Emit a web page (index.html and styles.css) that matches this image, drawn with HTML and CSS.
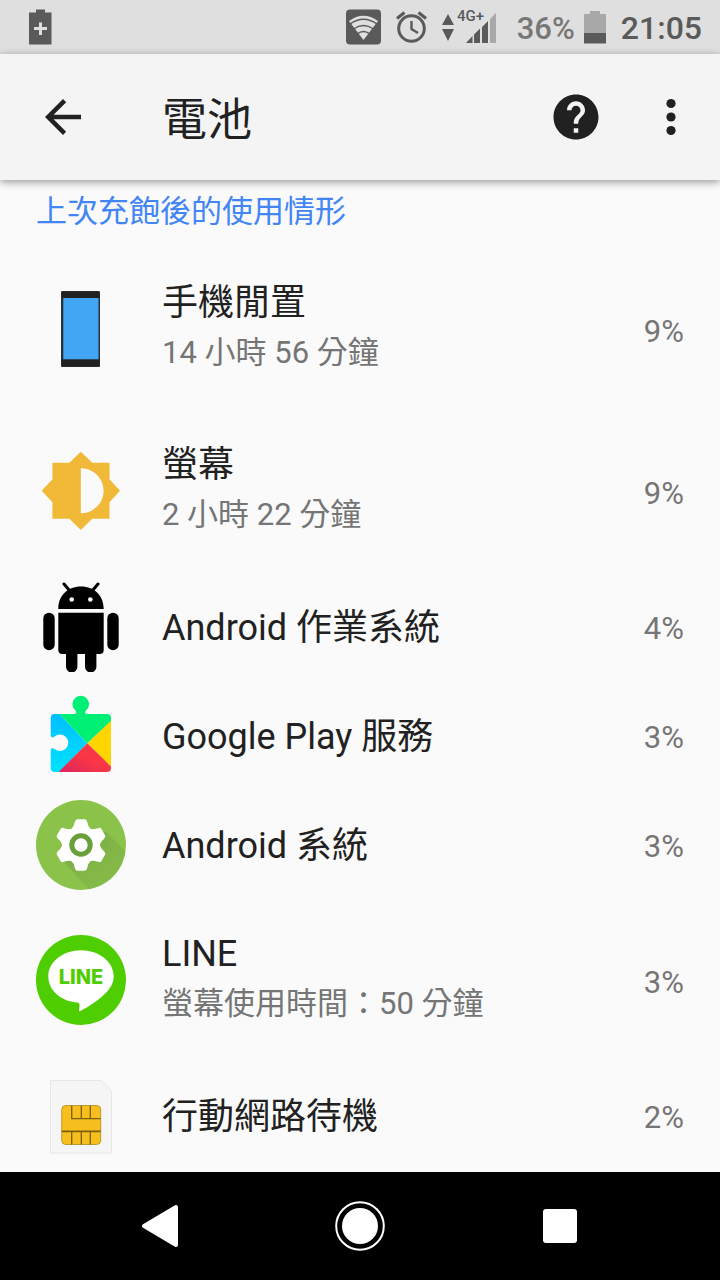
FILE: index.html
```html
<!DOCTYPE html>
<html lang="zh-Hant">
<head>
<meta charset="utf-8">
<meta name="viewport" content="width=device-width, initial-scale=1">
<title>電池</title>
<link rel="stylesheet" href="styles.css">
</head>
<body>
<div class="screen">
  <div class="status">
    <svg class="status-saver" width="24" height="36" viewBox="0 0 24 36" aria-hidden="true">
      <path fill="#5a5a5a" fill-rule="evenodd" d="M7 0.500h9v3h6.500v32H0v-32h7zM10 13.500v4.500H5v3h5v5h3v-5h5v-3h-5v-4.500z"/>
    </svg>
    <div class="status-right">
      <svg width="35" height="36" viewBox="0 0 35 36" aria-hidden="true">
        <rect x="0" y="0.500" width="35" height="35" rx="4" fill="#5a5a5a"/>
        <path d="M17.500 31L3 12q14.500-10.500 29 0z" fill="#dfdfdf"/>
        <path d="M4 15q13.500-9.500 27 0M7.500 20q10-7 20 0M11 25q6.500-5 13 0" fill="none" stroke="#5a5a5a" stroke-width="1.500"/>
      </svg>
      <svg class="alarm" width="31" height="32" viewBox="0 0 31 32" fill="none" stroke="#5a5a5a" aria-hidden="true">
        <circle cx="15.500" cy="17.500" r="12.800" stroke-width="3"/>
        <path d="M15.500 10v8l6.500 4" stroke-width="2.400"/>
        <path d="M1 7.500L8.500 1.500M30 7.500L22.500 1.500" stroke-width="3.200"/>
      </svg>
      <svg class="signal" width="56" height="48" viewBox="0 -6 56 48" role="img" aria-label="4G+">
        <path fill="#5a5a5a" d="M0 16l6-11 6 11zM0 20h12l-6 12z"/>
        <path fill="#5a5a5a" d="M24 34l6.500-7v7zM32 25.500l6-6V34h-6zM40 18l6-6v22h-6z"/>
        <path fill="#a8a8a8" d="M48 10l6-6v30h-6z"/>
        <text class="net" x="15" y="12">4G+</text>
      </svg>
      <span class="pct">36%</span>
      <svg class="battery" width="22" height="33" viewBox="0 0 22 33" aria-hidden="true">
        <path fill="#a8a8a8" d="M6 0h10v3h6v20H0V3h6z"/><path fill="#5a5a5a" d="M0 22h22v10.500H0z"/>
      </svg>
      <time class="clock">21:05</time>
    </div>
  </div>

  <header class="appbar">
    <button class="icon-btn" aria-label="返回"><svg width="54" height="54" viewBox="0 0 24 24"><path fill="#212121" d="M20 11H7.830l5.590-5.590L12 4l-8 8 8 8 1.410-1.410L7.830 13H20v-2z"/></svg></button>
    <h1 class="title">電池</h1>
    <button class="icon-btn" aria-label="說明"><svg width="54" height="54" viewBox="0 0 24 24"><path fill="#212121" d="M12 2C6.480 2 2 6.480 2 12s4.480 10 10 10 10-4.480 10-10S17.520 2 12 2zm1 17h-2v-2h2v2zm2.070-7.750l-.9.920C13.450 12.900 13 13.500 13 15h-2v-.5c0-1.100.450-2.100 1.170-2.830l1.240-1.260c.370-.360.590-.860.590-1.410 0-1.100-.9-2-2-2s-2 .9-2 2H8c0-2.210 1.790-4 4-4s4 1.790 4 4c0 .880-.360 1.680-.930 2.250z"/></svg></button>
    <button class="icon-btn" aria-label="更多選項"><svg width="54" height="54" viewBox="0 0 24 24" fill="#212121"><circle cx="12" cy="6" r="2.050"/><circle cx="12" cy="12" r="2.050"/><circle cx="12" cy="18" r="2.050"/></svg></button>
  </header>

  <main class="content">
    <h2 class="section">上次充飽後的使用情形</h2>
    <ul class="list">
      <li><button class="row tall">
        <svg class="icon" viewBox="0 0 90 90"><rect x="25" y="7" width="39" height="76" rx="1.500" fill="#263238"/><path fill="#212121" d="M25.500 7.500h38V14h-38zM25.500 75.500h38v7h-38z"/><path fill="#42a5f5" d="M27.300 14h35.200v61.200H27.300z"/></svg>
        <span class="text"><span class="name">手機閒置</span><span class="sub">14 小時 56 分鐘</span></span>
        <span class="value">9%</span>
      </button></li>
      <li><button class="row tall">
        <svg class="icon" viewBox="0 0 90 90"><path transform="translate(3.300 3.300) scale(3.460)" fill="#f0b938" d="M20.300 15.310L23.310 12l-3.010-3.310V3.900h-4.990L12 .690 8.690 3.900H3.800v4.790L.690 12l3.110 3.310V20.100h4.890L12 23.310l3.310-3.210h4.990zM12 18.500v-13c3.600 0 6.600 2.900 6.600 6.500s-3 6.500-6.600 6.500z"/></svg>
        <span class="text"><span class="name">螢幕</span><span class="sub">2 小時 22 分鐘</span></span>
        <span class="value">9%</span>
      </button></li>
      <li><button class="row">
        <svg class="icon" viewBox="0 0 90 90">
          <path d="M22.300 27C22.300 14 31 4.500 45 4.500S67.700 14 67.700 27zM22.300 30.700h45.400V68a4 4 0 0 1-4 4H26.300a4 4 0 0 1-4-4z"/>
          <path d="M28 2l5.500 6.500M62 2l-5.500 6.500" stroke="#000" stroke-width="3" stroke-linecap="round"/>
          <rect x="7.300" y="30.700" width="11.400" height="37.500" rx="5.700"/><rect x="71.300" y="30.700" width="11.400" height="37.500" rx="5.700"/>
          <rect x="30" y="60" width="11.400" height="30.500" rx="5.700"/><rect x="49" y="60" width="11.400" height="30.500" rx="5.700"/>
          <circle cx="35.700" cy="17.500" r="2.300" fill="#fafafa"/><circle cx="54.300" cy="17.500" r="2.300" fill="#fafafa"/>
        </svg>
        <span class="text"><span class="name">Android 作業系統</span></span>
        <span class="value">4%</span>
      </button></li>
      <li><button class="row">
        <svg class="icon" viewBox="0 0 90 90">
          <defs>
            <clipPath id="piece"><path d="M18.700 23H38c2.500 0 3-2 1.500-3.500a8.300 8.300 0 1 1 10.500 0C48.500 21 49 23 51.500 23H71a4 4 0 0 1 4 4v50a4 4 0 0 1-4 4H18.700a4 4 0 0 1-4-4V59.500c0-2.500 2-3 3.800-1.500a8.300 8.300 0 1 0 0-12.500c-1.800 1.500-3.800 1-3.800-1.500V27a4 4 0 0 1 4-4z"/></clipPath>
            <linearGradient id="blue" x1="0" y1="0" x2="0" y2="1"><stop offset="0" stop-color="#00bfff"/><stop offset="1" stop-color="#00e3ff"/></linearGradient>
            <linearGradient id="red" x1="1" y1="0" x2="0" y2="1"><stop offset="0" stop-color="#ff3a44"/><stop offset=".5" stop-color="#f93646"/><stop offset="1" stop-color="#d92660"/></linearGradient>
          </defs>
          <g clip-path="url(#piece)">
            <path fill="url(#blue)" d="M14 23h9.300l28 29.300L22 82h-8z"/>
            <path fill="#00f076" d="M23.300 23V0H75v30.200L51.300 52.300z"/>
            <path fill="#ffd500" d="M75 29.700v46L51.300 52.300z"/>
            <path fill="url(#red)" d="M51.300 52.300L75 75.500V81H22.500z"/>
          </g>
        </svg>
        <span class="text"><span class="name">Google Play 服務</span></span>
        <span class="value">3%</span>
      </button></li>
      <li><button class="row">
        <svg class="icon" viewBox="0 0 90 90">
          <defs>
            <clipPath id="disc"><circle cx="45" cy="45" r="45"/></clipPath>
            <linearGradient id="shade" x1=".2" y1=".2" x2=".9" y2=".9"><stop offset="0" stop-color="#73a142"/><stop offset="1" stop-color="#86bc49"/></linearGradient>
            <path id="tooth" d="M-10-15.500Q-7-18-6.200-23-5.600-25.700-3.600-25.700H3.600Q5.600-25.700 6.200-23 7-18 10-15.500z"/>
          </defs>
          <circle cx="45" cy="45" r="45" fill="#8bc34a"/>
          <g clip-path="url(#disc)">
            <path fill="url(#shade)" opacity=".6" d="M25 59l44-28 30 30v30H54z"/>
          </g>
          <g fill="#fff" transform="translate(45 45)">
            <circle r="18.500"/>
            <use href="#tooth"/><use href="#tooth" transform="rotate(60)"/><use href="#tooth" transform="rotate(120)"/><use href="#tooth" transform="rotate(180)"/><use href="#tooth" transform="rotate(240)"/><use href="#tooth" transform="rotate(300)"/>
            <circle r="9.200" fill="none" stroke="#689f38" stroke-width="5"/>
          </g>
        </svg>
        <span class="text"><span class="name">Android 系統</span></span>
        <span class="value">3%</span>
      </button></li>
      <li><button class="row tall">
        <svg class="icon" viewBox="0 0 90 90">
          <circle cx="45" cy="45" r="45" fill="#4ecd00"/>
          <path fill="#fff" d="M45 15.300c18 0 32.700 11.500 32.700 26 0 6-2.500 11-7 15.700C64 64.500 52 72 44.500 76c-1.500.7-1.800-.3-1.300-2.500.5-3 .8-5.500-1.700-6C25 66.500 12.300 55.500 12.300 41.300c0-14.500 14.700-26 32.700-26z"/>
          <text class="line-logo" x="45" y="49" text-anchor="middle">LINE</text>
        </svg>
        <span class="text"><span class="name">LINE</span><span class="sub">螢幕使用時間：50 分鐘</span></span>
        <span class="value">3%</span>
      </button></li>
      <li><button class="row">
        <svg class="icon" viewBox="0 0 90 90">
          <path d="M14.500 9.500H65L75.500 20v62h-61z" fill="#f5f5f5" stroke="#e6e6e6"/>
          <rect x="25.700" y="34.500" width="39" height="39" rx="4" fill="#f6bf1d" stroke="#b08a1c" stroke-width=".8"/>
          <path d="M35.700 34.500v13.200h29M45.300 34.500v13.200M54.300 34.500v13.200M35.700 60.300v13.200M45.300 60.300v13.200M54.300 60.300v13.200" fill="none" stroke="#7d5f0c" stroke-width="1.300"/>
          <path d="M25.700 60.300h39" stroke="#7d5f0c" stroke-width="1.800"/>
        </svg>
        <span class="text"><span class="name">行動網路待機</span></span>
        <span class="value">2%</span>
      </button></li>
    </ul>
  </main>

  <nav class="navbar">
    <button class="nav-btn" aria-label="上一頁"><svg width="50" height="50" viewBox="0 0 50 50"><path fill="#fff" stroke="#fff" stroke-width="4" stroke-linejoin="round" d="M9 25L41 6v38z"/></svg></button>
    <button class="nav-btn" aria-label="主畫面"><svg width="50" height="50" viewBox="0 0 50 50"><circle cx="25" cy="25" r="23.800" fill="none" stroke="#fff" stroke-width="2"/><circle cx="25" cy="25" r="18" fill="#fff"/></svg></button>
    <button class="nav-btn" aria-label="最近使用"><svg width="50" height="50" viewBox="0 0 50 50"><rect x="8" y="8" width="34" height="34" rx="3" fill="#fff"/></svg></button>
  </nav>
</div>
</body>
</html>
```
FILE: styles.css
```css
* {
  box-sizing: border-box;
}

body {
  margin: 0;
  background: #fafafa;
  color: #212121;
  font-family: Roboto, "Noto Sans CJK TC", sans-serif;
}

button {
  padding: 0;
  border: 0;
  background: none;
  color: inherit;
  font: inherit;
  cursor: pointer;
}

svg {
  display: block;
  flex: none;
}

.screen {
  display: flex;
  flex-direction: column;
  height: 100vh;
  overflow: hidden;
}

.status {
  display: flex;
  align-items: center;
  justify-content: space-between;
  flex: none;
  height: 54px;
  padding: 0 18px 0 29px;
  background: #dfdfdf;
}

.status-right {
  display: flex;
  align-items: center;
}

.alarm {
  margin-left: 15px;
}

.signal {
  margin-left: 15px;
}

.net {
  fill: #5a5a5a;
  font-size: 15px;
  font-weight: 500;
}

.pct {
  margin-left: 19px;
  padding-top: 3px;
  color: #777;
  font-size: 31px;
  font-weight: 500;
  line-height: 51px;
}

.battery {
  margin-left: 9px;
}

.clock {
  margin-left: 15px;
  padding-top: 3px;
  color: #5a5a5a;
  font-size: 32px;
  font-weight: 500;
  line-height: 51px;
}

.appbar {
  position: relative;
  z-index: 1;
  display: flex;
  align-items: center;
  gap: 41px;
  flex: none;
  height: 126px;
  padding: 0 22px 0 36px;
  background: #f4f4f4;
  box-shadow: 0 2px 8px rgba(0, 0, 0, 0.4);
}

.title {
  flex: 1;
  margin: 0 0 0 31px;
  padding-top: 7px;
  font-size: 45px;
  font-weight: 400;
  line-height: 60px;
}

.content {
  flex: 1;
  min-height: 0;
  overflow: hidden;
}

.section {
  margin: 0;
  padding: 8px 36px 12px;
  color: #4285f4;
  font-size: 31px;
  font-weight: 400;
  line-height: 48px;
}

.list {
  margin: 0;
  padding: 0;
  list-style: none;
}

.row {
  display: flex;
  align-items: center;
  width: 100%;
  min-height: 109px;
  padding: 0 36px;
  text-align: left;
}

.row.tall {
  min-height: 162px;
}

.icon {
  width: 90px;
  height: 90px;
}

.text {
  display: flex;
  flex-direction: column;
  flex: 1;
  min-width: 0;
  margin-left: 36px;
  padding-top: 4px;
}

.tall .text {
  padding: 0 0 2px;
}

.name {
  font-size: 36px;
  line-height: 49px;
}

.sub {
  color: #757575;
  font-size: 31px;
  line-height: 49px;
}

.value {
  margin-left: 24px;
  padding-top: 5px;
  color: #757575;
  font-size: 31px;
  line-height: 36px;
}

.line-logo {
  fill: #4ecd00;
  font-family: Inter, sans-serif;
  font-size: 20px;
  font-weight: 800;
}

.navbar {
  display: flex;
  align-items: center;
  flex: none;
  height: 108px;
  padding: 0 60px;
  background: #000;
}

.nav-btn {
  display: flex;
  flex: 1;
  align-items: center;
  justify-content: center;
  height: 100%;
}
```
